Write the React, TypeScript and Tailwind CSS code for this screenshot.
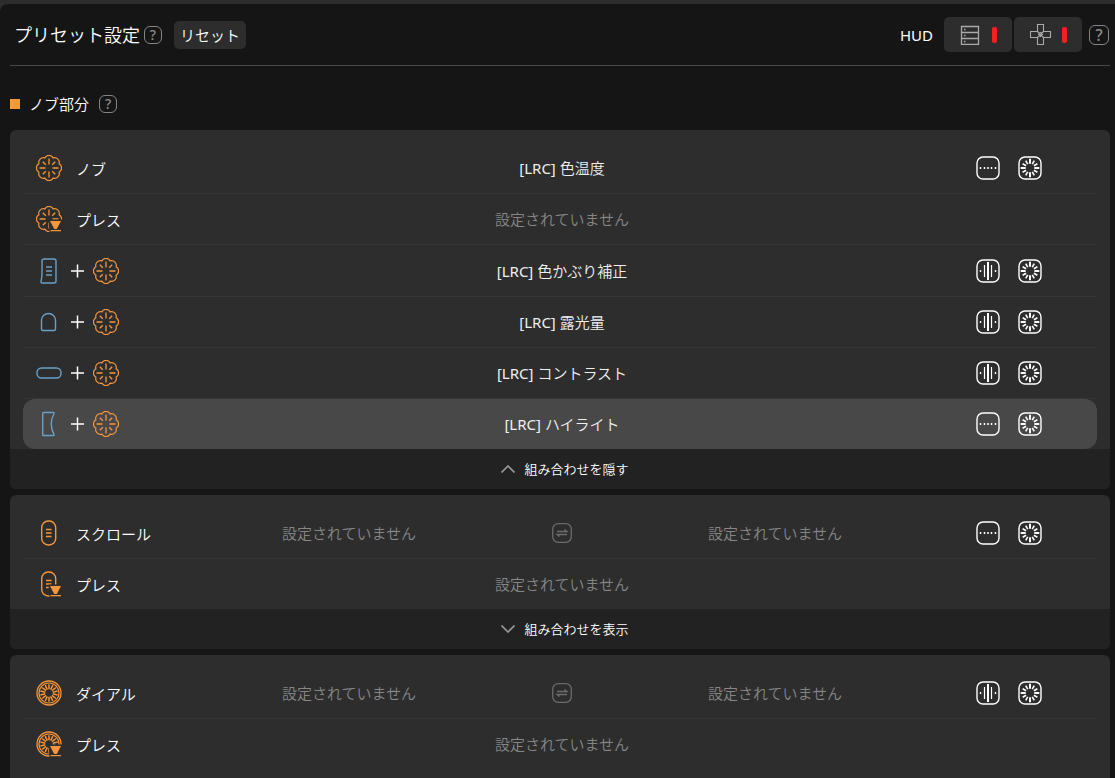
import React from "react";

const ORANGE = "#f7963a";
const BLUE = "#6a9fc8";

function scallop(count: number, radius: number, arc: number) {
  const points = Array.from({ length: count + 1 }, (_, i) => {
    const a = ((i + 0.5) / count) * Math.PI * 2 - Math.PI / 2;
    return `${(13 + radius * Math.cos(a)).toFixed(2)} ${(13 + radius * Math.sin(a)).toFixed(2)}`;
  });
  return "M" + points[0] + points.slice(1).map((p) => ` A${arc} ${arc} 0 0 1 ${p}`).join("") + "Z";
}

type SpokesProps = { count: number; from: number; to: number; c?: number; width?: number; turn?: number };

function Spokes({ count, from, to, c = 13, width = 1.2, turn = 0 }: SpokesProps) {
  return (
    <g strokeWidth={width}>
      {Array.from({ length: count }, (_, i) => (
        <line key={i} x1={c} x2={c} y1={c - from} y2={c - to} transform={`rotate(${turn + (i * 360) / count} ${c} ${c})`} />
      ))}
    </g>
  );
}

function PressMark() {
  return (
    <g stroke="none">
      <path d="M12.5 13.5H26V26H13.5z" fill="#2d2d2d" />
      <path d="M14 15h11l-4.2 8h-2.6z" fill={ORANGE} />
      <path d="M14.5 24H25v1.200H14.500z" fill={ORANGE} />
    </g>
  );
}

function Glyph({ color, children }: { color: string; children: React.ReactNode }) {
  return (
    <svg viewBox="0 0 26 26" className="h-[26px] w-[26px] shrink-0" fill="none" stroke={color} strokeWidth="1.4" aria-hidden="true">
      {children}
    </svg>
  );
}

function Knob({ press = false }: { press?: boolean }) {
  return (
    <Glyph color={ORANGE}>
      <path d={scallop(8, 10.9, 4.7)} strokeWidth="1.2" />
      <Spokes count={4} from={3.5} to={9.5} width={1.3} />
      <Spokes count={4} from={4.5} to={8.8} turn={45} width={1.3} />
      {press && <PressMark />}
    </Glyph>
  );
}

function Scroll({ press = false }: { press?: boolean }) {
  return (
    <Glyph color={ORANGE}>
      <rect x="5.7" y="1" width="14" height="24" rx="6.5" />
      <path d="M10 9.5h5.5M10 13h5.5M10 16.5h5.5" />
      {press && <PressMark />}
    </Glyph>
  );
}

function Dial({ press = false }: { press?: boolean }) {
  return (
    <Glyph color={ORANGE}>
      <circle cx="13" cy="13" r="12" strokeWidth="1.3" />
      <circle cx="13" cy="13" r="10" strokeWidth="1.2" />
      <Spokes count={14} from={3.8} to={8.8} width={1.5} />
      {press && <PressMark />}
    </Glyph>
  );
}

function TallKey() {
  return (
    <Glyph color={BLUE}>
      <path d="M8 1h10a2 2 0 0 1 2 2v20a2 2 0 0 1-2 2H6a1 1 0 0 1-1-1.2C5.8 20 6 18 6 14V3a2 2 0 0 1 2-2z" />
      <path d="M10 9h6M10 13h6M10 17h6" />
    </Glyph>
  );
}

function RoundKey() {
  return (
    <Glyph color={BLUE}>
      <path d="M5.5 11a7 6.5 0 0 1 14 0v9a1.5 1.5 0 0 1-1.5 1.5h-11A1.5 1.5 0 0 1 5.5 20z" />
    </Glyph>
  );
}

function WideKey() {
  return (
    <Glyph color={BLUE}>
      <rect x="1" y="8" width="24" height="10" rx="4.5" />
    </Glyph>
  );
}

function CurvedKey() {
  return (
    <Glyph color={BLUE}>
      <path d="M7.5 1.5h10a.7.7 0 0 1 .6 1C14.500 9 14.500 17 18.100 23.500a.7.7 0 0 1-.6 1h-10a.8.8 0 0 1-.8-.8V2.300a.8.8 0 0 1 .8-.8z" />
    </Glyph>
  );
}

function Plus() {
  return (
    <svg viewBox="0 0 14 14" className="h-3.5 w-3.5 shrink-0" stroke="#fff" strokeWidth="1.5" aria-hidden="true">
      <path d="M7.5 .5v13M1 7h13" />
    </svg>
  );
}

function Help({ large = false }: { large?: boolean }) {
  return (
    <button
      type="button"
      aria-label="ヘルプ"
      className={
        "flex shrink-0 items-center justify-center border border-[#858585] font-medium text-[#8c8c8c] " +
        (large ? "h-5 w-5 rounded-md text-base" : "h-[18px] w-[18px] rounded-md text-sm")
      }
    >
      ?
    </button>
  );
}

function WaveButton({ wave }: { wave: boolean }) {
  return (
    <button type="button" aria-label="感度">
      <svg viewBox="0 0 24 24" className="block h-6 w-6" fill="none" stroke="#fff" strokeWidth="1.4">
        <rect x="1" y="1" width="22" height="22" rx="6" />
        {wave ? (
          <>
            <path d="M12 3v18" strokeWidth="2" />
            <path d="M8.5 6v12M15.5 6v12" strokeWidth="1.2" />
            <path d="M4.5 11v2M19.5 11v2" />
          </>
        ) : (
          <path d="M4.5 11v2M8.5 11v2M12 11v2M15.5 11v2M19.5 11v2" strokeWidth="1.5" />
        )}
      </svg>
    </button>
  );
}

function BurstButton() {
  return (
    <button type="button" aria-label="加速">
      <svg viewBox="0 0 24 24" className="block h-6 w-6" fill="none" stroke="#fff" strokeWidth="1.4">
        <rect x="1" y="1" width="22" height="22" rx="6" />
        <Spokes count={12} from={4.5} to={8.5} c={12} width={1.6} />
        <Spokes count={4} from={4.5} to={9.3} c={12} width={2} />
      </svg>
    </button>
  );
}

function SwapButton() {
  return (
    <button type="button" aria-label="入れ替え" className="mx-0.5">
      <svg viewBox="0 0 20 20" className="block h-5 w-5" fill="none" stroke="#6b6b6b" strokeWidth="1.3">
        <rect x=".7" y=".7" width="18.6" height="18.6" rx="5.5" />
        <path d="M5 8.5h10l-2.5-2M15 11.5H5l2.5 2" />
      </svg>
    </button>
  );
}

type RowProps = {
  icon: React.ReactNode;
  label?: string;
  combo?: boolean;
  value?: string;
  split?: boolean;
  mode?: "dots" | "wave";
  active?: boolean;
};

function Unset() {
  return <span className="flex-1 text-center text-[#868686]">設定されていません</span>;
}

function Row({ icon, label, combo, value, split, mode, active }: RowProps) {
  return (
    <div
      className={
        "mx-[13px] flex h-[51px] items-center border-b last:h-[50px] last:border-b-0 " +
        (active ? "rounded-xl border-transparent bg-[#484848]" : "border-[#363636]")
      }
    >
      <div className="flex w-[125px] shrink-0 items-center pl-[13px] whitespace-nowrap text-white">
        {icon}
        {combo ? (
          <span className="flex items-center gap-[9px] pl-2">
            <Plus />
            <Knob />
          </span>
        ) : (
          <span className="pt-0.5 pl-3.5">{label}</span>
        )}
      </div>
      <div className="flex flex-1 items-center">
        {split ? (
          <>
            <Unset />
            <SwapButton />
            <Unset />
          </>
        ) : value ? (
          <span className="flex-1 text-center text-[#f0f0f0]">
            <span className="font-normal">[LRC]</span> {value}
          </span>
        ) : (
          <Unset />
        )}
      </div>
      <div className="flex w-[121px] shrink-0 gap-[18px]">
        {mode && (
          <>
            <WaveButton wave={mode === "wave"} />
            <BurstButton />
          </>
        )}
      </div>
    </div>
  );
}

function ComboToggle({ open }: { open: boolean }) {
  return (
    <button type="button" className="flex h-10 w-full items-center justify-center gap-[9px] bg-[#222] pl-2.5 text-[13px] text-white">
      <svg viewBox="0 0 14 8" className="h-2 w-3.5" fill="none" stroke="#999" strokeWidth="1.6" aria-hidden="true">
        <path d={open ? "M.5 7.5 7 1l6.500 6.500" : "M.5 .5 7 7 13.500 .5"} />
      </svg>
      {open ? "組み合わせを隠す" : "組み合わせを表示"}
    </button>
  );
}

export default function App() {
  return (
    <div className="h-screen overflow-hidden bg-[#2d2d2d] pt-1 font-['Noto_Sans','Noto_Sans_CJK_JP',sans-serif] text-[15px] leading-6 font-[350] text-white">
      <main className="flex h-full flex-col rounded-tl-lg bg-[#151515] pr-[5px] pl-2.5">
        <header className="flex h-[62px] shrink-0 items-center justify-between border-b border-[#484848] pr-px pl-1">
          <div className="flex items-center">
            <h1 className="text-lg font-[350]">プリセット設定</h1>
            <span className="pl-1">
              <Help />
            </span>
            <button type="button" className="ml-3 h-7 rounded-[5px] bg-[#2d2d2d] px-1.5">
              リセット
            </button>
          </div>
          <div className="flex items-center">
            <span className="pr-[11px] font-normal">HUD</span>
            <div className="flex gap-0.5">
              <button type="button" aria-label="リスト表示" className="flex h-[35px] w-[68px] items-center gap-3 rounded-[5px] bg-[#2d2d2d] pl-4">
                <svg viewBox="0 0 20 20" className="h-5 w-5" fill="none" stroke="#aaa" strokeWidth="1.3">
                  <path d="M1.5 1.5h17v18h-17zM1.5 7.5h17M1.5 13.5h17" />
                  <path d="M4 4.5h1.500M4 10.500h1.500M4 16.500h1.500" strokeWidth="1.5" />
                </svg>
                <span className="h-4 w-[5px] rounded-xs bg-[#f61f1f]" />
              </button>
              <button type="button" aria-label="パッド表示" className="flex h-[35px] w-[68px] items-center gap-2.5 rounded-[5px] bg-[#2d2d2d] pl-4">
                <svg viewBox="0 0 22 22" className="h-[22px] w-[22px]" fill="none" stroke="#aaa" strokeWidth="1.1">
                  <path d="M7.5 .5h6v7h7v6h-7v7h-6v-7h-7v-6h7z" />
                  <path d="M7.5 7.5l6 6M13.5 7.5l-6 6M10.5 8.5l2 2-2 2-2-2z" />
                </svg>
                <span className="h-4 w-[5px] rounded-xs bg-[#f61f1f]" />
              </button>
            </div>
            <span className="pl-[7px]">
              <Help large />
            </span>
          </div>
        </header>

        <div className="flex h-16 shrink-0 items-center pt-3">
          <span className="h-2.5 w-2.5 bg-[#ff9933]" />
          <h2 className="pr-2.5 pl-[9px] font-[350]">ノブ部分</h2>
          <Help />
        </div>

        <div className="flex flex-1 flex-col gap-1.5">
          <section className="shrink-0 overflow-hidden rounded-md bg-[#2d2d2d] pt-[13px]">
            <Row icon={<Knob />} label="ノブ" value="色温度" mode="dots" />
            <Row icon={<Knob press />} label="プレス" />
            <div className="pt-px">
              <Row icon={<TallKey />} combo value="色かぶり補正" mode="wave" />
              <Row icon={<RoundKey />} combo value="露光量" mode="wave" />
              <Row icon={<WideKey />} combo value="コントラスト" mode="wave" />
              <Row icon={<CurvedKey />} combo value="ハイライト" mode="dots" active />
            </div>
            <ComboToggle open />
          </section>

          <section className="shrink-0 overflow-hidden rounded-md bg-[#2d2d2d] pt-[13px]">
            <div>
              <Row icon={<Scroll />} label="スクロール" split mode="dots" />
              <Row icon={<Scroll press />} label="プレス" />
            </div>
            <ComboToggle open={false} />
          </section>

          <section className="flex-1 rounded-t-md bg-[#2d2d2d] pt-[13px]">
            <Row icon={<Dial />} label="ダイアル" split mode="wave" />
            <Row icon={<Dial press />} label="プレス" />
          </section>
        </div>
      </main>
    </div>
  );
}
